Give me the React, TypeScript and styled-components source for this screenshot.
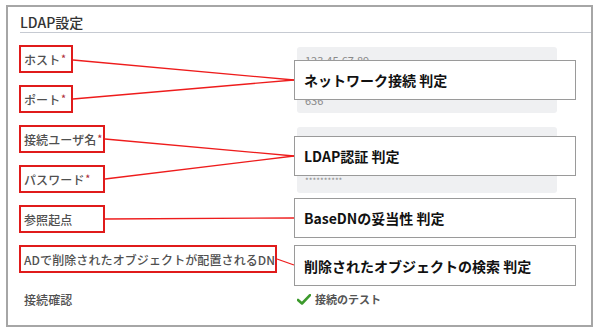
import styled, { createGlobalStyle } from 'styled-components';

const FONT = '"Noto Sans CJK JP", "Noto Sans", "Liberation Sans", sans-serif';

type Field = {
  label: string;
  required?: boolean;
  boxWidth: number;
  value?: string;
  secret?: boolean;
};

const FIELDS: Field[] = [
  { label: 'ホスト', required: true, boxWidth: 54, value: '123.45.67.89' },
  { label: 'ポート', required: true, boxWidth: 54, value: '636' },
  { label: '接続ユーザ名', required: true, boxWidth: 86 },
  { label: 'パスワード', required: true, boxWidth: 86, value: '**********', secret: true },
  { label: '参照起点', boxWidth: 86 },
  { label: 'ADで削除されたオブジェクトが配置されるDN', boxWidth: 258 },
];

const CALLOUTS = [
  { text: 'ネットワーク接続 判定', top: 60, height: 40 },
  { text: 'LDAP認証 判定', top: 136, height: 40 },
  { text: 'BaseDNの妥当性 判定', top: 198, height: 40 },
  { text: '削除されたオブジェクトの検索 判定', top: 245, height: 41 },
];

// label box edge -> callout left edge
const LINKS = [
  [73, 60, 294, 80],
  [73, 99, 294, 80],
  [105, 139, 294, 156],
  [105, 179, 294, 156],
  [105, 219, 294, 218],
  [277, 259, 294, 265],
];

const App = () => {
  return (
    <Page>
      <GlobalStyle />
      <Panel>
        <PanelTitle>LDAP設定</PanelTitle>
        <Form>
          {FIELDS.map((field) => (
            <FormRow key={field.label}>
              <FieldLabel $boxWidth={field.boxWidth} $marked>
                {field.label}
                {field.required && <Required>*</Required>}
              </FieldLabel>
              <FieldInput $secret={field.secret}>{field.value}</FieldInput>
            </FormRow>
          ))}
          <FormRow>
            <FieldLabel $boxWidth={86}>接続確認</FieldLabel>
            <TestLink>
              <svg width="14" height="11" viewBox="0 0 14 11">
                <path d="M1 6 L5 9.5 L13 1.2" fill="none" stroke="#3c9a2c" strokeWidth="2.6" strokeLinecap="round" strokeLinejoin="round" />
              </svg>
              接続のテスト
            </TestLink>
          </FormRow>
        </Form>
      </Panel>

      <LinkLayer width="600" height="333" viewBox="0 0 600 333">
        {LINKS.map(([x1, y1, x2, y2], i) => (
          <line key={i} x1={x1} y1={y1} x2={x2} y2={y2} stroke="#ee1c1c" strokeWidth="1.3" />
        ))}
      </LinkLayer>
      {CALLOUTS.map((c) => (
        <Callout key={c.text} $top={c.top} $height={c.height}>
          {c.text}
        </Callout>
      ))}
    </Page>
  );
};

const GlobalStyle = createGlobalStyle`
  html, body {
    margin: 0;
    padding: 0;
    background: #fff;
  }
  body {
    font-family: ${FONT};
  }
  * {
    box-sizing: border-box;
  }
`;

const Page = styled.div`
  position: relative;
  width: 600px;
  height: 333px;
  overflow: hidden;
  padding: 5px 0 0 6px;
`;

const Panel = styled.section`
  width: 587px;
  height: 322px;
  border: 2px solid #a6a6a6;
  padding-left: 12px;
`;

const PanelTitle = styled.h2`
  margin: 0;
  padding: 8px 0 3px;
  font-size: 14px;
  line-height: 14px;
  font-weight: 500;
  color: #333;
  border-bottom: 1px solid #c6cad2;
`;

const Form = styled.div`
  display: flex;
  flex-direction: column;
  gap: 12px;
  padding-top: 12px;
`;

const FormRow = styled.div`
  display: grid;
  grid-template-columns: 277px 260px;
  height: 28px;
`;

const FieldLabel = styled.div<{ $boxWidth: number; $marked?: boolean }>`
  display: flex;
  align-items: center;
  width: ${({ $boxWidth }) => $boxWidth}px;
  height: 28px;
  margin-left: -1px;
  padding-left: 3px;
  border: 2px solid ${({ $marked }) => ($marked ? '#e01b1b' : 'transparent')};
  font-size: 12px;
  font-weight: 500;
  color: #505050;
  white-space: nowrap;
  letter-spacing: 0.1px;
`;

const Required = styled.span`
  align-self: flex-start;
  margin: 7px 0 0 1px;
  font-size: 9px;
  line-height: 9px;
  font-weight: 700;
  color: #b0303a;
`;

const FieldInput = styled.div<{ $secret?: boolean }>`
  display: flex;
  align-items: center;
  height: 26px;
  margin-top: 2px;
  padding-left: 8px;
  border-radius: 3px;
  background: #eff0f2;
  font-size: ${({ $secret }) => ($secret ? '8px' : '11px')};
  color: #8a8a8a;
`;

const TestLink = styled.div`
  display: flex;
  align-items: center;
  gap: 4px;
  font-size: 11px;
  font-weight: 700;
  color: #555;
`;

const LinkLayer = styled.svg`
  position: absolute;
  left: 0;
  top: 0;
  pointer-events: none;
`;

const Callout = styled.div<{ $top: number; $height: number }>`
  position: absolute;
  left: 294px;
  top: ${({ $top }) => $top}px;
  width: 282px;
  height: ${({ $height }) => $height}px;
  display: flex;
  align-items: center;
  padding-left: 9px;
  border: 1.5px solid #9a9a9a;
  background: #fff;
  font-size: 14px;
  font-weight: 700;
  color: #111;
`;

export default App;
